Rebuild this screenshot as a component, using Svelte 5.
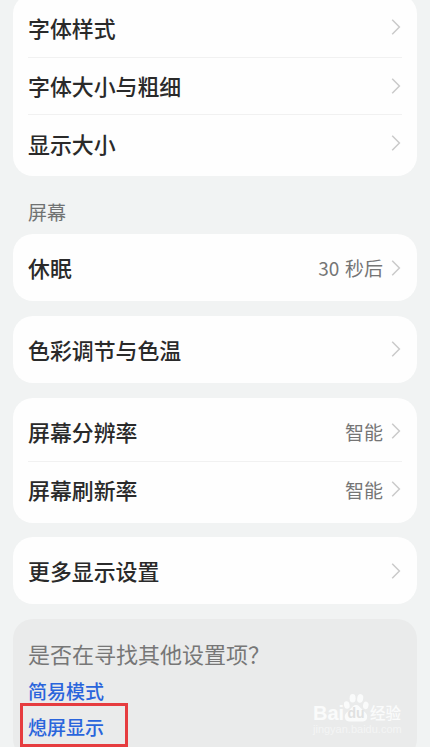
<script lang="ts">
	type Row = { label: string; value?: string };
	type Group = { title?: string; rows: Row[] };

	const groups: Group[] = [
		{ rows: [{ label: '字体样式' }, { label: '字体大小与粗细' }, { label: '显示大小' }] },
		{ title: '屏幕', rows: [{ label: '休眠', value: '30 秒后' }] },
		{ rows: [{ label: '色彩调节与色温' }] },
		{
			rows: [
				{ label: '屏幕分辨率', value: '智能' },
				{ label: '屏幕刷新率', value: '智能' }
			]
		},
		{ rows: [{ label: '更多显示设置' }] }
	];

	const links = ['简易模式', '熄屏显示'];
	const highlighted = '熄屏显示';
</script>

<main class="screen">
	{#each groups as group}
		{#if group.title}
			<h2 class="title">{group.title}</h2>
		{/if}
		<section class="card">
			{#each group.rows as row}
				<div class="row">
					<span class="label">{row.label}</span>
					{#if row.value}
						<span class="value">{row.value}</span>
					{/if}
					<svg class="chevron" viewBox="0 0 10 18" aria-hidden="true">
						<path d="M1.2 1.8 L8.4 9 L1.2 16.2" />
					</svg>
				</div>
			{/each}
		</section>
	{/each}

	<section class="suggest">
		<p class="question">是否在寻找其他设置项？</p>
		{#each links as link}
			<div class="link" class:highlighted={link === highlighted}>{link}</div>
		{/each}

		<div class="watermark">
			<div class="brand">
				<span class="latin">Bai</span>
				<div class="paw">
					<svg viewBox="0 0 26 30" aria-hidden="true">
						<ellipse cx="3.8" cy="12" rx="2.8" ry="3.8" transform="rotate(-12 3.8 12)" />
						<ellipse cx="9.6" cy="5.2" rx="3" ry="4.3" />
						<ellipse cx="17.2" cy="5.4" rx="3" ry="4.3" transform="rotate(10 17.2 5.4)" />
						<ellipse cx="22.8" cy="12.4" rx="2.7" ry="3.8" transform="rotate(12 22.8 12.4)" />
						<path
							d="M13 12 C16 12 17.2 14.7 19.5 17 C22 19.3 25 21 24 25.2 C23 29 19.5 28.5 13 28.4 C6.5 28.5 3 29 2 25.2 C1 21 4 19.3 6.5 17 C8.8 14.7 10 12 13 12 Z"
						/>
					</svg>
					<span class="du">du</span>
				</div>
				<span class="cn">经验</span>
			</div>
			<div class="site">jingyan.baidu.com</div>
		</div>
	</section>
</main>

<style>
	:global(body) {
		background: #f1f3f3;
	}

	.screen {
		box-sizing: border-box;
		height: 747px;
		padding: 0 13.5px 0 13px;
		overflow: hidden;
		display: flex;
		flex-direction: column;
		font-family: 'Noto Sans CJK SC', sans-serif;
		background: #f1f3f3;
	}

	.card {
		flex-shrink: 0;
		box-sizing: border-box;
		margin-bottom: 14.5px;
		padding: 5.3px 14.5px 4.3px 15px;
		border-radius: 20px;
		background: #fefefe;
	}

	.card:first-child {
		margin-top: -6.2px;
	}

	.row {
		box-sizing: border-box;
		height: 57.7px;
		display: flex;
		align-items: center;
	}

	.row + .row {
		border-top: 1px solid #f1f1f1;
	}

	.label {
		flex: 1;
		font-size: 21.9px;
		font-weight: 500;
		line-height: 30px;
		color: #2a2a2a;
	}

	.value {
		margin-right: 8px;
		font-size: 19px;
		line-height: 28px;
		word-spacing: 1.5px;
		color: #757575;
	}

	.chevron {
		width: 10px;
		height: 18px;
		margin: 0 1px 1px 0;
	}

	.chevron path {
		fill: none;
		stroke: #cacaca;
		stroke-width: 1.5;
	}

	.title {
		flex-shrink: 0;
		margin: 7px 0 8.1px 15px;
		font-size: 19px;
		font-weight: 400;
		line-height: 28px;
		color: #707272;
	}

	.suggest {
		position: relative;
		flex: 1 0 140px;
		box-sizing: border-box;
		padding: 18px 15px 0;
		border-radius: 20px;
		background: #eaebeb;
	}

	.question {
		margin: 0 0 6px;
		font-size: 22px;
		line-height: 32px;
		color: #777;
	}

	.link {
		position: relative;
		width: fit-content;
		margin-bottom: 4px;
		font-size: 19px;
		font-weight: 500;
		line-height: 32px;
		color: #2a65dc;
	}

	.link.highlighted::after {
		content: '';
		position: absolute;
		top: -8px;
		left: -8px;
		width: 102px;
		height: 38px;
		border: 3px solid #e63c3f;
	}

	.watermark {
		position: absolute;
		top: 75px;
		left: 300px;
		color: #fafbfb;
		font-family: 'Liberation Sans', 'Noto Sans CJK SC', sans-serif;
	}

	.brand {
		display: flex;
		align-items: flex-end;
		height: 29px;
	}

	.latin {
		width: 30px;
		font-size: 20px;
		font-weight: 700;
		line-height: 20px;
	}

	.paw {
		position: relative;
		width: 26px;
		height: 30px;
	}

	.paw svg {
		display: block;
		width: 26px;
		height: 30px;
		fill: #fafbfb;
	}

	.du {
		position: absolute;
		left: 0;
		bottom: 3px;
		width: 26px;
		font-size: 14px;
		font-weight: 700;
		line-height: 13px;
		text-align: center;
		color: #e0e1e1;
	}

	.cn {
		margin-left: 1px;
		font-size: 15.5px;
		font-weight: 500;
		line-height: 18px;
	}

	.site {
		font-size: 11px;
		line-height: 13px;
		color: #f4f5f5;
	}
</style>
